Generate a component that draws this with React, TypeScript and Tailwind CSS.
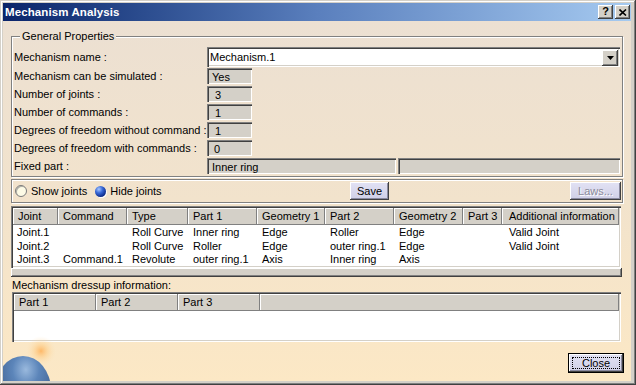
import React from "react";

const raised =
  "shadow-[inset_-1px_-1px_0_#404040,inset_1px_1px_0_#ffffff,inset_-2px_-2px_0_#808080]";
const sunken =
  "shadow-[inset_1px_1px_0_#808080,inset_2px_2px_0_#404040,inset_-1px_-1px_0_#ffffff,inset_-2px_-2px_0_#d4d0c8]";
const roBox =
  "h-[16px] bg-[#d4d0c8] shadow-[inset_1px_1px_0_#808080,inset_2px_2px_0_#404040,inset_-1px_-1px_0_#ffffff] flex items-center pt-[2px] pl-[5px]";
const headCell =
  "h-full flex items-center pl-[5px] bg-[#d4d0c8] shadow-[inset_-1px_-1px_0_#808080,inset_1px_1px_0_#ffffff] whitespace-nowrap overflow-hidden";
const lavBtn =
  "h-[18px] flex items-center justify-center bg-linear-to-b from-[#e2e2f4] to-[#cfcfe6] shadow-[inset_-1px_-1px_0_#404040,inset_1px_1px_0_#ffffff,inset_-2px_-2px_0_#8a8aa0]";

const jointCols =
  "grid grid-cols-[45px_69px_61px_69px_68px_69px_69px_39px_117px]";

function Row({ label, children, first }: { label: string; children: React.ReactNode; first?: boolean }) {
  return (
    <div className={`flex items-center ${first ? "h-[20px]" : "h-[16px] mt-[2px]"}`}>
      <div className="w-[194px] pl-px whitespace-nowrap">{label}</div>
      <div className="flex-1 flex">{children}</div>
    </div>
  );
}

export default function App() {
  const joints = [
    ["Joint.1", "", "Roll Curve", "Inner ring", "Edge", "Roller", "Edge", "", "Valid Joint"],
    ["Joint.2", "", "Roll Curve", "Roller", "Edge", "outer ring.1", "Edge", "", "Valid Joint"],
    ["Joint.3", "Command.1", "Revolute", "outer ring.1", "Axis", "Inner ring", "Axis", "", ""],
  ];
  const heads = ["Joint", "Command", "Type", "Part 1", "Geometry 1", "Part 2", "Geometry 2", "Part 3", "Additional information"];

  return (
    <div className="w-[636px] h-[385px] bg-[#d4d0c8] font-['Liberation_Sans',Arial,sans-serif] text-[11px] text-black leading-[13px] pt-[3px] pl-[3px] pr-[5px] pb-[4px] shadow-[inset_-1px_-1px_0_#404040,inset_1px_1px_0_#d4d0c8,inset_-2px_-2px_0_#808080,inset_2px_2px_0_#ffffff] flex flex-col overflow-hidden">
      {/* Title bar */}
      <div className="h-[18px] shrink-0 bg-linear-to-r from-[#0a246a] via-[#5a7fbd] to-[#a6caf0] flex items-center pl-[2px] pr-[1px]">
        <span className="text-white font-bold text-[11.5px] tracking-[0.1px]">Mechanism Analysis</span>
        <div className="ml-auto flex gap-[2px]">
          <div className={`w-[15px] h-[14px] bg-[#d4d0c8] ${raised} flex items-center justify-center font-bold text-[11px] leading-none pb-px`}>?</div>
          <div className={`w-[15px] h-[14px] bg-[#d4d0c8] ${raised} flex items-center justify-center`}>
            <svg width="8" height="7" viewBox="0 0 8 7">
              <path d="M0.5 0.5 L7 6.5 M7 0.5 L0.5 6.5" stroke="#000" strokeWidth="1.6" />
            </svg>
          </div>
        </div>
      </div>

      {/* Body */}
      <div className="relative flex-1 flex flex-col pl-[8px] pr-[8px] bg-linear-to-b from-[#ece0d2] via-[#f2e3cc] to-[#fce8c5] overflow-hidden">
        {/* Decorative globe */}
        <svg className="absolute left-0 bottom-0" width="70" height="45" viewBox="0 0 70 45">
          <defs>
            <radialGradient id="glow" cx="0.5" cy="0.5" r="0.5">
              <stop offset="0" stopColor="#ffa848" stopOpacity="0.75" />
              <stop offset="0.5" stopColor="#ffc878" stopOpacity="0.35" />
              <stop offset="1" stopColor="#ffe0b0" stopOpacity="0" />
            </radialGradient>
            <radialGradient id="planet" cx="0.55" cy="0.2" r="0.8">
              <stop offset="0" stopColor="#8fb4e0" />
              <stop offset="0.3" stopColor="#4a7ab8" />
              <stop offset="1" stopColor="#1a3a70" />
            </radialGradient>
          </defs>
          <circle cx="38" cy="15" r="15" fill="url(#glow)" />
          <ellipse cx="20" cy="54" rx="28" ry="34" fill="url(#planet)" opacity="0.9" />
        </svg>

        {/* General Properties */}
        <fieldset className="relative mt-[9px] p-0 pl-px pr-px pb-[2px] m-0 min-w-0 border border-[#808080] shadow-[inset_1px_1px_0_#ffffff,1px_1px_0_#ffffff]">
          <legend className="ml-[7px] px-[2px] leading-[12px] bg-[#ece0d2]">General Properties</legend>
          <div className="pt-[5px] flex flex-col">
            <Row label="Mechanism name :" first>
              <div className={`flex-1 mr-px h-[20px] bg-white ${sunken} flex items-center pl-[3px] pt-px`}>
                <span>Mechanism.1</span>
                <div className={`ml-auto mr-[2px] w-[16px] h-[16px] bg-[#d4d0c8] ${raised} flex items-center justify-center`}>
                  <svg width="7" height="4" viewBox="0 0 7 4">
                    <path d="M0 0 H7 L3.5 4 Z" fill="#000" />
                  </svg>
                </div>
              </div>
            </Row>
            <div className="h-0 -mt-px" />
            <Row label="Mechanism can be simulated :">
              <div className={`${roBox} w-[45px]`}>Yes</div>
            </Row>
            <Row label="Number of joints :">
              <div className={`${roBox} w-[45px] pl-[8px]`}>3</div>
            </Row>
            <Row label="Number of commands :">
              <div className={`${roBox} w-[45px] pl-[8px]`}>1</div>
            </Row>
            <Row label="Degrees of freedom without command :">
              <div className={`${roBox} w-[45px] pl-[8px]`}>1</div>
            </Row>
            <Row label="Degrees of freedom with commands :">
              <div className={`${roBox} w-[45px] pl-[7px]`}>0</div>
            </Row>
            <Row label="Fixed part :">
              <div className={`${roBox} w-[189px]`}>Inner ring</div>
              <div className={`${roBox} ml-[2px] flex-1 mr-px`} />
            </Row>
          </div>
        </fieldset>

        {/* Radio / buttons row */}
        <div className="mt-[2px] h-[24px] border border-[#808080] shadow-[inset_1px_1px_0_#ffffff,1px_1px_0_#ffffff] flex items-center">
          <div className="w-[338px] flex items-center pl-[3px]">
            <div className="w-[12px] h-[12px] rounded-full border border-[#7a7a7a] bg-[#fdfbe6] shadow-[inset_1px_1px_0_#b0b0a8]" />
            <span className="ml-[4px]">Show joints</span>
            <div className="ml-[8px] w-[11px] h-[11px] rounded-full bg-[radial-gradient(circle_at_35%_30%,#a8c8ff_0%,#3a6ad8_35%,#0c2a88_75%,#061a5a_100%)] shadow-[1px_1px_0_#ffffff]" />
            <span className="ml-[4px]">Hide joints</span>
          </div>
          <div className={`${lavBtn} w-[39px]`}>Save</div>
          <div className="flex-1" />
          <div className={`${lavBtn} w-[51px] mr-px text-[#8a8a9a] [text-shadow:1px_1px_0_#ffffff]`}>Laws...</div>
        </div>

        {/* Joints table */}
        <div className={`mt-[3px] mr-[2px] h-[62px] bg-white p-[2px] ${sunken} flex flex-col`}>
          <div className={`${jointCols} h-[17px] shrink-0`}>
            {heads.map((h, i) => (
              <div key={h} className={`${headCell} ${i === 0 ? "pl-[4px]" : ""} ${i === 7 ? "pl-[4px]" : ""} ${i === 8 ? "pl-[7px]" : ""}`}>
                {h}
              </div>
            ))}
          </div>
          <div className="pt-px">
            {joints.map((r, ri) => (
              <div key={ri} className={`${jointCols} h-[13.5px] items-center`}>
                {r.map((c, ci) => (
                  <div key={ci} className={`whitespace-nowrap ${ci === 0 ? "pl-[4px]" : ci === 8 ? "pl-[7px]" : "pl-[5px]"}`}>
                    {c}
                  </div>
                ))}
              </div>
            ))}
          </div>
        </div>
        <div className="mr-px h-[9px] bg-[#d4d0c8] shadow-[inset_-1px_-1px_0_#404040,inset_1px_1px_0_#ffffff,inset_-2px_-2px_0_#808080]" />

        {/* Dressup */}
        <div className="mt-[2px] ml-px h-[13px] whitespace-nowrap">Mechanism dressup information:</div>
        <div className={`ml-px mr-[2px] h-[50px] bg-white p-[2px] ${sunken} flex flex-col`}>
          <div className="grid grid-cols-[82px_82px_82px_1fr] h-[17px]">
            <div className={headCell}>Part 1</div>
            <div className={headCell}>Part 2</div>
            <div className={headCell}>Part 3</div>
            <div className={headCell} />
          </div>
        </div>

        {/* Close */}
        <div className="mt-[11px] flex justify-end mr-[-1px]">
          <div className="w-[56px] h-[20px] border border-black">
            <div className={`w-full h-full bg-linear-to-b from-[#e2e2f4] to-[#cfcfe6] shadow-[inset_-1px_-1px_0_#404040,inset_1px_1px_0_#ffffff,inset_-2px_-2px_0_#8a8aa0] p-[3px]`}>
              <div className="w-full h-full border border-dotted border-black flex items-center justify-center">
                Close
              </div>
            </div>
          </div>
        </div>
      </div>
    </div>
  );
}
